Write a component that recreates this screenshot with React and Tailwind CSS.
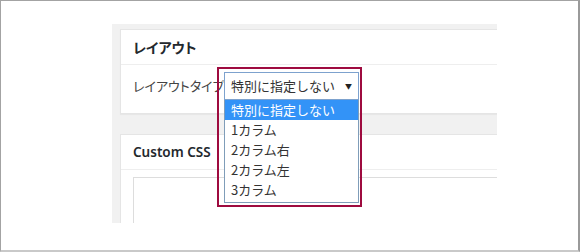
import React from 'react';

const jp = { fontFamily: '"Noto Sans CJK JP", "Noto Sans", sans-serif' };

const options = ['特別に指定しない', '1カラム', '2カラム右', '2カラム左', '3カラム'];

const LayoutSelect = () => (
    <div className="relative">
        {/* closed select */}
        <div className="w-[135px] h-[28px] border border-[#7da2ce] bg-white flex items-center pl-[6px] pr-[6px] text-[13px] text-[#333]">
            <span className="flex-1 whitespace-nowrap">特別に指定しない</span>
            <span className="text-[7px] text-[#222]">▼</span>
        </div>
        {/* open list */}
        <ul className="absolute left-0 top-full w-[135px] bg-white border border-t-0 border-[#7f9db9] pb-[2px] z-10">
            {options.map((opt, i) => (
                <li
                    key={opt}
                    className={`h-[20px] leading-[20px] pl-[6px] text-[13px] whitespace-nowrap ${i === 0 ? 'bg-[#3393f7] text-white' : 'text-[#333]'}`}
                >
                    {opt}
                </li>
            ))}
        </ul>
        {/* annotation frame */}
        <div className="absolute left-[-7px] top-[-5px] w-[145px] h-[140px] border-2 border-[#9e0b3f] z-20 pointer-events-none" />
    </div>
);

export default function App() {
    return (
        <div className="w-[580px] h-[252px] bg-white border-l border-t border-[#a3a3a3] border-r-2 border-r-[#9a9a9a] border-b-2 border-b-[#c9c9c9] overflow-hidden" style={jp}>
            <div className="ml-[111px] mt-[23px] w-[385px] h-[199px] bg-[#f1f1f1] overflow-hidden pl-2 pt-[5px]">
                {/* layout card */}
                <div className="w-[400px] bg-white border border-[#e5e5e5] shadow-[0_1px_1px_rgba(0,0,0,0.04)]">
                    <div className="h-[35px] flex items-center pl-3 border-b border-[#eeeeee]">
                        <h2 className="text-[14px] font-bold text-[#23282d] [font-feature-settings:'palt']">レイアウト</h2>
                    </div>
                    <div className="h-[48px] flex items-start pt-[7px] pl-3">
                        <label className="w-[91px] whitespace-nowrap text-[13px] text-[#444] leading-[28px] [font-feature-settings:'palt']">レイアウトタイプ</label>
                        <LayoutSelect />
                    </div>
                </div>

                {/* custom css card */}
                <div className="mt-[20px] w-[400px] h-[120px] bg-white border border-[#e5e5e5]">
                    <div className="h-[35px] flex items-center pl-3 border-b border-[#eeeeee]">
                        <h2 className="text-[13.5px] font-semibold text-[#23282d]" style={{ fontFamily: '"Noto Sans", sans-serif' }}>Custom CSS</h2>
                    </div>
                    <div className="pl-3 pt-[7px]">
                        <div className="h-[80px] border border-[#dddddd]" />
                    </div>
                </div>
            </div>
        </div>
    );
}
